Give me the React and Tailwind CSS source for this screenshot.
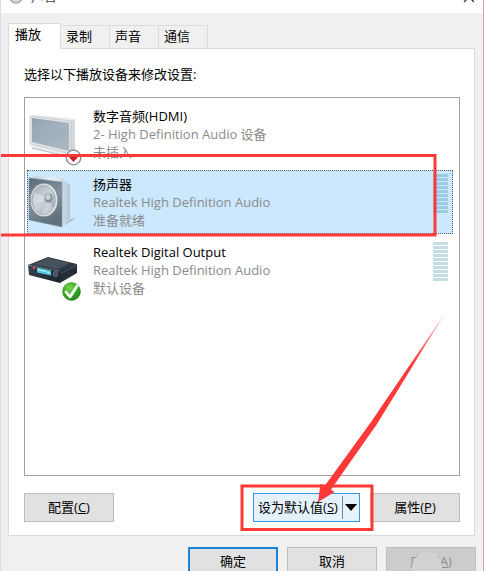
import { useState } from "react";

const TABS = ["播放", "录制", "声音", "通信"];

const DEVICES = [
  { id: "hdmi", name: "数字音频(HDMI)", driver: "2- High Definition Audio 设备", status: "未插入", Icon: MonitorIcon, meter: false },
  { id: "speaker", name: "扬声器", driver: "Realtek High Definition Audio", status: "准备就绪", Icon: SpeakerIcon, meter: true },
  { id: "digital", name: "Realtek Digital Output", driver: "Realtek High Definition Audio", status: "默认设备", Icon: ReceiverIcon, meter: true },
];

const BUTTON = "border border-[#bcbcbc] bg-[#e1e1e1] h-[29px] w-[90px] text-center";

function MonitorIcon() {
  return (
    <svg viewBox="0 0 56 64" className="w-14 h-16 shrink-0" aria-hidden="true">
      <defs>
        <linearGradient id="screen" x1="0" y1="0" x2="0.6" y2="1">
          <stop offset="0" stopColor="#8797a6" />
          <stop offset="0.5" stopColor="#9dadba" />
          <stop offset="1" stopColor="#a9b6c0" />
        </linearGradient>
      </defs>
      <path d="M4 43l1 4 34 8 7-4V47z" fill="#e9eced" />
      <path d="M5 46l34 8 6-3" fill="none" stroke="#bcc2c6" strokeWidth="1" />
      <path d="M42 18l6-1v31l-5 3z" fill="#d3d8da" />
      <path d="M3 14l6-1 39 4-5 2z" fill="#e8ebec" />
      <path d="M3 14l41 5v33L3 42z" fill="#dfe3e5" stroke="#bcc1c5" strokeWidth="0.6" />
      <path d="M5 16l37 5v28L5 40z" fill="url(#screen)" />
      <path d="M5 16l37 5v7Q20 24 5 34z" fill="#c0cad2" opacity="0.2" />
      <circle cx="46.500" cy="55.500" r="7.300" fill="#fafafa" stroke="#858585" strokeWidth="1.300" />
      <path d="M44.500 53h4v2h2.500l-4.500 5-4.500-5h2.500z" fill="#d41c1c" />
    </svg>
  );
}

function SpeakerIcon() {
  return (
    <svg viewBox="0 0 56 64" className="w-14 h-16 shrink-0" aria-hidden="true">
      <defs>
        <linearGradient id="cabinet" x1="0" y1="0" x2="0.3" y2="1">
          <stop offset="0" stopColor="#566873" />
          <stop offset="0.5" stopColor="#8394a0" />
          <stop offset="1" stopColor="#5f717c" />
        </linearGradient>
        <linearGradient id="side" x1="0" y1="0" x2="1" y2="0">
          <stop offset="0" stopColor="#c3ccd6" />
          <stop offset="0.6" stopColor="#e9eef3" />
          <stop offset="1" stopColor="#b6c5d6" />
        </linearGradient>
        <linearGradient id="cone" x1="0" y1="0" x2="1" y2="1">
          <stop offset="0" stopColor="#a5afb9" />
          <stop offset="0.5" stopColor="#cbd3da" />
          <stop offset="1" stopColor="#929eaa" />
        </linearGradient>
      </defs>
      <path d="M36 56l13-8-5 1z" fill="#9eb6cc" />
      <path d="M2 8l7-2 26 2 8 7v34l-8 8z" fill="url(#side)" />
      <path d="M2 8l33 4v45L2 50z" fill="url(#cabinet)" stroke="#8d99a3" strokeWidth="0.6" />
      <ellipse cx="17" cy="30" rx="14" ry="17" fill="#dde2e7" stroke="#66757f" strokeWidth="0.8" />
      <ellipse cx="16.500" cy="30" rx="11.800" ry="14.500" fill="url(#cone)" stroke="#98a3ae" strokeWidth="0.8" />
      <path d="M21 28L7 22q-2 7 0 13zM21 28L15 44q7 1 11-6z" fill="#eef1f4" opacity="0.4" />
      <ellipse cx="21.500" cy="28" rx="4.200" ry="4.800" fill="#87929c" />
      <ellipse cx="21" cy="27" rx="2.600" ry="3" fill="#c9d1d8" />
    </svg>
  );
}

function ReceiverIcon() {
  return (
    <svg viewBox="0 0 56 64" className="w-14 h-16 shrink-0" aria-hidden="true">
      <defs>
        <linearGradient id="front" x1="0" y1="0" x2="1" y2="1">
          <stop offset="0" stopColor="#3a4650" />
          <stop offset="1" stopColor="#18212a" />
        </linearGradient>
        <radialGradient id="ok" cx="0.4" cy="0.3" r="0.8">
          <stop offset="0" stopColor="#7cd64b" />
          <stop offset="0.6" stopColor="#2fa321" />
          <stop offset="1" stopColor="#147414" />
        </radialGradient>
      </defs>
      <path d="M1 27l20-8 29 7-17 8z" fill="#2f3943" />
      <path d="M6 26l15-6 22 5-12 6z" fill="#58646f" opacity="0.6" />
      <path d="M33 33l17-7v9L33 45z" fill="#252e38" />
      <path d="M34 35l15-7" stroke="#566270" strokeWidth="0.8" />
      <path d="M1 27l32 6v12L2 37z" fill="url(#front)" />
      <path d="M1 27l32 6" stroke="#75818c" strokeWidth="0.700" />
      <path d="M10 29.500l14 3v5l-14-3z" fill="#55c9dc" />
      <path d="M11 31.500l8 2M20 34l3 1" stroke="#c8f6fb" strokeWidth="1" />
      <circle cx="7" cy="30" r="1.300" fill="#e05445" />
      <ellipse cx="28.500" cy="36" rx="2.300" ry="2.800" fill="#46525e" stroke="#768390" strokeWidth="0.6" />
      <circle cx="44.500" cy="53.500" r="9" fill="url(#ok)" stroke="#45912f" strokeWidth="0.6" />
      <path d="M39 54l4 5 7-11" fill="none" stroke="#fff" strokeWidth="2.800" strokeLinecap="round" strokeLinejoin="round" />
    </svg>
  );
}

function LevelMeter({ active }) {
  return (
    <div className="flex flex-col gap-px w-[15px] pt-1 mr-[5px]">
      {Array.from({ length: 10 }, (_, i) => (
        <span key={i} className={`h-[3px] ${active ? "bg-[#9ccbe0]" : "bg-[#c4dde2]"}`} />
      ))}
    </div>
  );
}

function DeviceRow({ device, selected, onSelect }) {
  const { Icon } = device;
  return (
    <li
      role="option"
      aria-selected={selected}
      onClick={onSelect}
      className={`relative flex h-16 ${
        selected ? "bg-[#cce8ff] outline-1 outline-dotted -outline-offset-1 outline-[#50606c]" : ""
      }`}
    >
      <Icon />
      <div className="flex-1 min-w-0 pl-[10px] pt-[5px] leading-[18px]">
        <p className="text-black">{device.name}</p>
        <p className="text-[#8b8b8b]">{device.driver}</p>
        <p className="text-[#8b8b8b]">{device.status}</p>
      </div>
      {device.meter && <LevelMeter active={selected} />}
    </li>
  );
}

function Annotations() {
  return (
    <svg className="absolute -left-px top-0 w-[484px] h-[571px] pointer-events-none" viewBox="0 0 484 571" aria-hidden="true">
      <defs>
        <linearGradient id="fade" gradientUnits="userSpaceOnUse" x1="446" y1="311" x2="410" y2="366">
          <stop offset="0" stopColor="#ff3838" stopOpacity="0.25" />
          <stop offset="1" stopColor="#ff3838" />
        </linearGradient>
      </defs>
      <g fill="none" stroke="#ff3838" strokeWidth="3">
        <rect x="-4" y="155.500" width="439" height="79.500" />
        <rect x="242" y="486" width="130" height="43.500" />
      </g>
      <path d="M446.500 311L371 422 325 485.500 320.500 484 318 502 334.500 492 331 489.500 377 424z" fill="url(#fade)" />
    </svg>
  );
}

export default function App() {
  const [tab, setTab] = useState("播放");
  const [selected, setSelected] = useState("speaker");

  return (
    <div className="relative h-screen overflow-hidden flex flex-col bg-[#f0f0f0] border-l border-l-[#ecd6e6] border-r border-r-[#d6a0c6] text-[13px] text-black font-['Open_Sans','Noto_Sans_CJK_SC',sans-serif]">
      <header className="flex items-center shrink-0 h-8 -mt-[19px] pl-2 pr-2 bg-white">
        <svg viewBox="0 0 14 14" className="w-[14px] h-[14px]" aria-hidden="true">
          <circle cx="7" cy="7" r="6" fill="#d5d9dc" stroke="#a3a7aa" strokeWidth="1.500" />
          <circle cx="7" cy="7" r="2.500" fill="#959b9f" />
        </svg>
        <h1 className="flex-1 pl-2 text-[#444]">声音</h1>
        <button type="button" aria-label="关闭">
          <svg viewBox="0 0 12 12" className="w-3 h-3" fill="none" stroke="#333" strokeWidth="1.300">
            <path d="M1 1l10 10M11 1L1 11" />
          </svg>
        </button>
      </header>

      <main className="flex flex-col pt-[10px] pl-[7px] pr-2">
        <div role="tablist" className="flex items-end">
          {TABS.map((name) => (
            <button
              key={name}
              type="button"
              role="tab"
              aria-selected={tab === name}
              onClick={() => setTab(name)}
              className={`border-t border-[#dcdcdc] text-left ${
                tab === name
                  ? "relative z-10 -mb-px h-[26px] w-[53px] border-x bg-white pl-[6px] pb-1"
                  : "h-[23px] w-[49px] border-r bg-[#f0f0f0] pl-[5px]"
              }`}
            >
              {name}
            </button>
          ))}
        </div>

        <section className="border border-[#dcdcdc] bg-white pl-[15px] pr-[14px] pt-[15px] pb-[13px]">
          <p id="prompt" className="leading-5">选择以下播放设备来修改设置:</p>
          <ul
            role="listbox"
            aria-labelledby="prompt"
            className="flex flex-col gap-1 h-[379px] mt-[13px] pt-1 pl-[2px] pr-[6px] border border-[#9ba0a9]"
          >
            {DEVICES.map((device) => (
              <DeviceRow
                key={device.id}
                device={device}
                selected={selected === device.id}
                onSelect={() => setSelected(device.id)}
              />
            ))}
          </ul>

          <div className="flex mt-[17px] gap-[10px]">
            <button type="button" className={`${BUTTON} mr-auto`}>配置(<u>C</u>)</button>
            <div className="flex items-center h-[29px] w-[107px] border border-[#3399e6] bg-[#e5f1fb]">
              <button type="button" className="flex-1 h-full whitespace-nowrap">
                设为默认值(<u>S</u>)
              </button>
              <span className="w-px h-[23px] bg-[#7b858c]" />
              <button type="button" aria-label="更多选项" className="px-[2px]">
                <svg viewBox="0 0 12 7" className="w-3 h-[7px]">
                  <path d="M0 0h12L6 7z" fill="#000" />
                </svg>
              </button>
            </div>
            <button type="button" className={BUTTON}>属性(<u>P</u>)</button>
          </div>
        </section>

        <footer className="flex justify-end gap-[9px] pt-[11px] -mr-px">
          <button type="button" className="border-2 border-[#1883d7] bg-[#e1e1e1] h-[29px] w-[90px]">确定</button>
          <button type="button" className={BUTTON}>取消</button>
          <button type="button" disabled className="relative border border-[#bfbfbf] bg-[#cccccc] text-[#8f8f8f] h-[29px] w-[90px]">
            应用(<u>A</u>)
            <span className="absolute left-[25px] top-1 h-8 w-[30px] rounded-t-full bg-[#d2d2d2]" />
          </button>
        </footer>
      </main>

      <Annotations />
    </div>
  );
}
